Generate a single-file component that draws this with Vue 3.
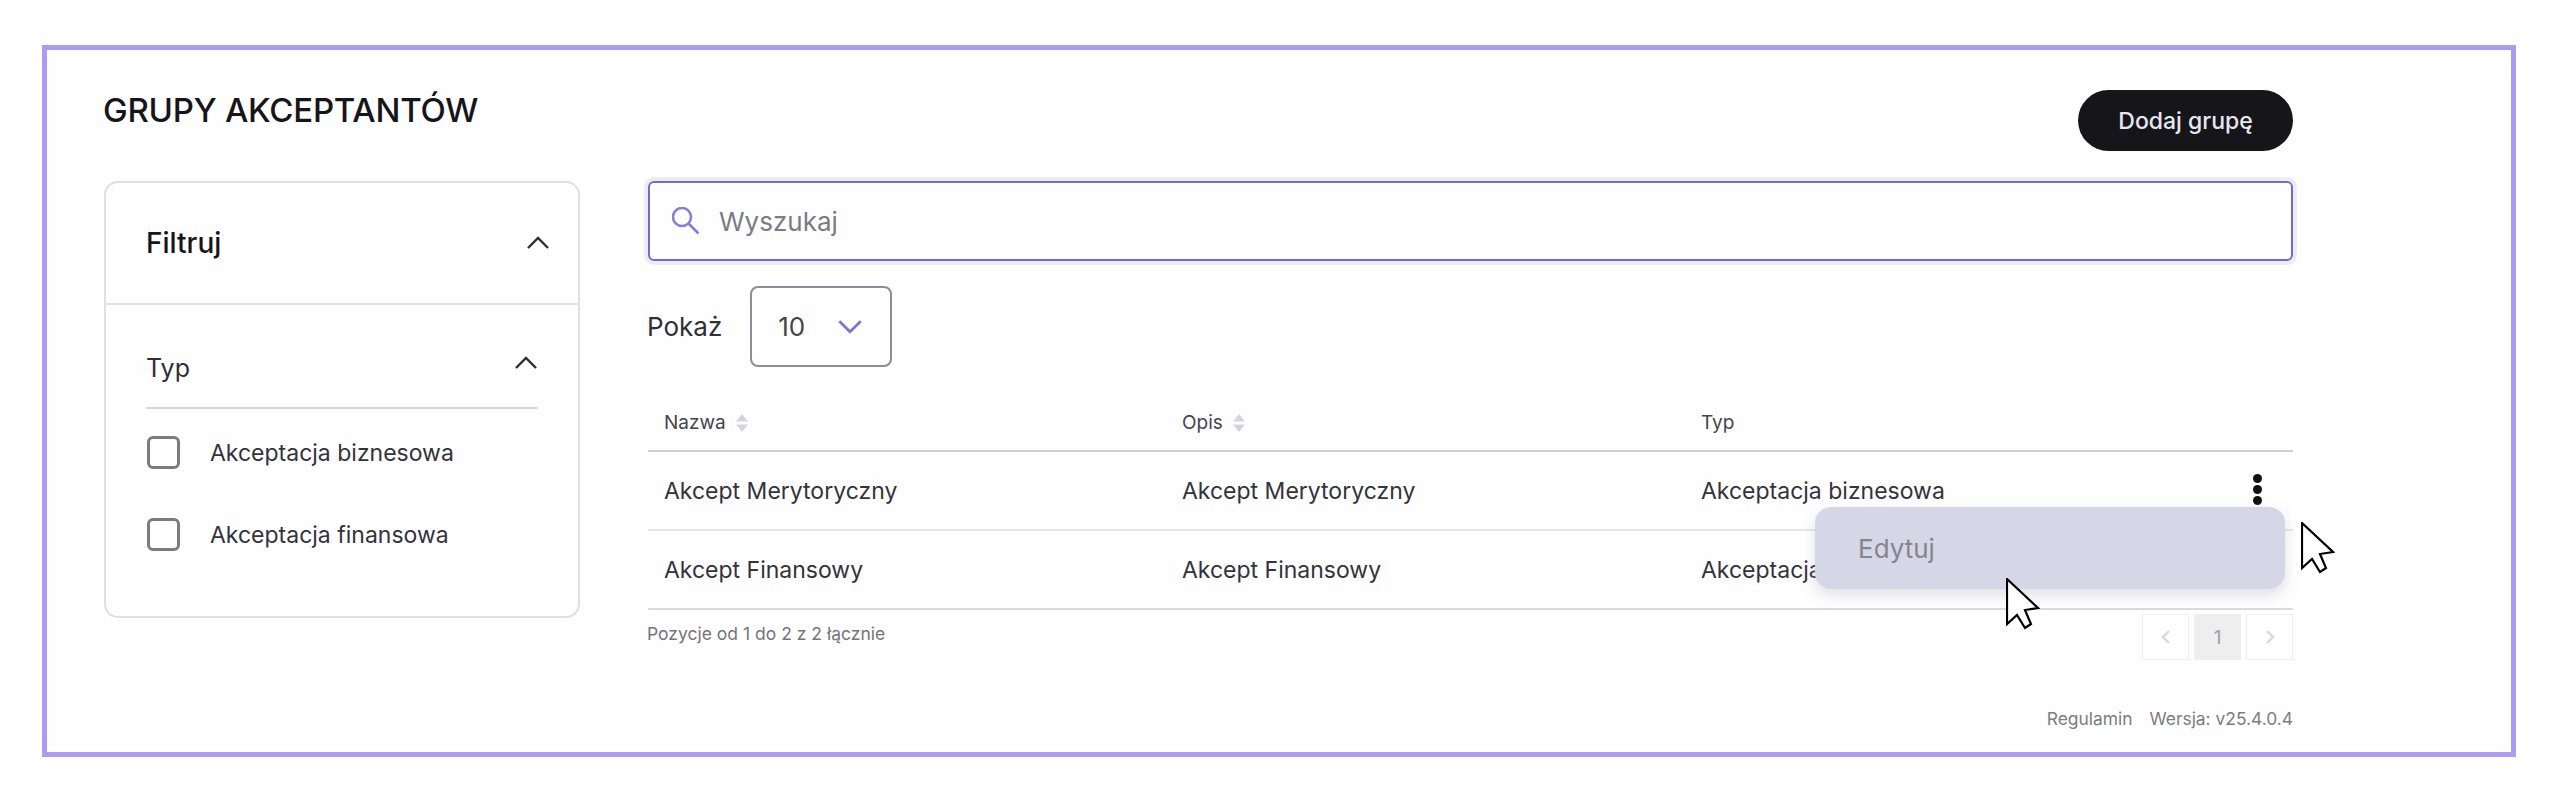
<script setup>
const rows = [
  { name: 'Akcept Merytoryczny', desc: 'Akcept Merytoryczny', type: 'Akceptacja biznesowa', menu: true },
  { name: 'Akcept Finansowy', desc: 'Akcept Finansowy', type: 'Akceptacja finansowa', menu: false },
]
const filters = ['Akceptacja biznesowa', 'Akceptacja finansowa']
</script>

<template>
  <div class="page">
    <main class="frame">
      <header class="top">
        <h1>GRUPY AKCEPTANTÓW</h1>
        <button class="add">Dodaj grupę</button>
      </header>
      <div class="body">
        <aside class="card">
          <div class="card-head">
            <span>Filtruj</span>
            <svg class="chev" viewBox="0 0 24 14"><path d="M2 12 12 2l10 10" /></svg>
          </div>
          <div class="card-body">
            <div class="group-head">
              <span>Typ</span>
              <svg class="chev" viewBox="0 0 24 14"><path d="M2 12 12 2l10 10" /></svg>
            </div>
            <label v-for="f in filters" :key="f" class="check">
              <span class="box"></span>{{ f }}
            </label>
          </div>
        </aside>
        <section class="content">
          <div class="search">
            <svg viewBox="0 0 28 28"><circle cx="10" cy="10" r="9" /><path d="m16.500 16.500 10 10" /></svg>
            <span>Wyszukaj</span>
          </div>
          <div class="show">
            <span>Pokaż</span>
            <div class="select">
              <span>10</span>
              <svg viewBox="0 0 24 14"><path d="m2 2 10 10L22 2" /></svg>
            </div>
          </div>
          <table>
            <colgroup>
              <col class="c1" /><col class="c2" /><col /><col class="c4" />
            </colgroup>
            <thead>
              <tr>
                <th>Nazwa<svg class="sort" viewBox="0 0 14 20"><path d="M7 1l6 7.500H1zM7 19l-6-7.500h12z" /></svg></th>
                <th>Opis<svg class="sort" viewBox="0 0 14 20"><path d="M7 1l6 7.500H1zM7 19l-6-7.500h12z" /></svg></th>
                <th>Typ</th>
                <th></th>
              </tr>
            </thead>
            <tbody>
              <tr v-for="r in rows" :key="r.name">
                <td>{{ r.name }}</td>
                <td>{{ r.desc }}</td>
                <td>{{ r.type }}</td>
                <td class="act">
                  <span v-if="r.menu" class="dots"><i></i><i></i><i></i></span>
                  <div v-if="r.menu" class="menu">Edytuj</div>
                </td>
              </tr>
            </tbody>
          </table>
          <div class="under">
            <span class="info">Pozycje od 1 do 2 z 2 łącznie</span>
            <div class="pager">
              <span class="pg"><svg viewBox="0 0 10 16"><path d="M8 2 2 8l6 6" /></svg></span>
              <span class="pg cur">1</span>
              <span class="pg"><svg viewBox="0 0 10 16"><path d="m2 2 6 6-6 6" /></svg></span>
            </div>
          </div>
        </section>
      </div>
      <footer class="foot"><span>Regulamin</span><span>Wersja: v25.4.0.4</span></footer>
      <svg class="cursor c-a" viewBox="0 0 34 52"><path d="M1 1v45l10-9 8 13 6-4-6-14 13-2z" /></svg>
      <svg class="cursor c-b" viewBox="0 0 34 52"><path d="M1 1v45l10-9 8 13 6-4-6-14 13-2z" /></svg>
    </main>
  </div>
</template>

<style>
html, body { margin: 0; background: #fefefe; }
</style>

<style scoped>
.page {
  width: 2572px;
  height: 804px;
  padding: 45px 56px 0 42px;
  box-sizing: border-box;
  font-family: Inter, "Noto Sans", sans-serif;
  color: #2e2e36;
  background: #fefefe;
  overflow: hidden;
}
.frame {
  position: relative;
  box-sizing: border-box;
  width: 2474px;
  height: 712px;
  border: 5px solid #ab9cf1;
  padding: 40px 218px 0 57px;
}
.top { display: flex; justify-content: space-between; align-items: flex-start; height: 61px; margin-bottom: 30px; }
h1 { margin: 0 0 0 -1px; font-size: 33px; line-height: 40px; font-weight: 500; color: #15151a; letter-spacing: -0.25px; }
.add {
  width: 215px; height: 61px; border: 0; border-radius: 31px;
  background: #15151a; color: #e6e8f0;
  font: 500 23px Inter, sans-serif;
}
.body { display: flex; gap: 68px; align-items: flex-start; }
.card {
  width: 476px; height: 437px; box-sizing: border-box; flex: none;
  border: 2px solid #e0e0e4; border-radius: 14px;
}
.card-head {
  height: 122px; box-sizing: border-box; padding: 0 28px 0 40px;
  display: flex; align-items: center; justify-content: space-between;
  border-bottom: 2px solid #e2e2de;
  font-size: 28px; font-weight: 500; color: #15151a;
}
.chev { width: 24px; height: 14px; fill: none; stroke: #2e2e36; stroke-width: 2.4; }
.card-body { padding: 0 40px; }
.group-head {
  height: 104px; box-sizing: border-box; padding-top: 24px;
  display: flex; align-items: center; justify-content: space-between;
  border-bottom: 2px solid #d6d6da;
  font-size: 25px;
}
.group-head .chev { margin-top: -10px; }
.check { display: flex; align-items: center; height: 33px; margin-top: 27px; font-size: 23px; color: #33333b; }
.check + .check { margin-top: 49px; }
.box {
  width: 33px; height: 33px; box-sizing: border-box; margin-right: 30px; margin-left: 1px;
  border: 3px solid #7b7b88; border-radius: 6px;
}
.content { flex: 1; min-width: 0; }
.search {
  height: 80px; box-sizing: border-box; display: flex; align-items: center;
  border: 2px solid #7668cc; border-radius: 6px; padding-left: 22px;
  box-shadow: 0 0 0 4px #ececf3;
  font-size: 26px; color: #7b7b85;
}
.search svg { width: 28px; height: 28px; margin-right: 19px; fill: none; stroke: #8a7ed4; stroke-width: 2.6; }
.show { display: flex; align-items: center; gap: 28px; margin-top: 25px; font-size: 26px; }
.show > span:first-child { margin-left: -1px; }
.select {
  width: 142px; height: 81px; box-sizing: border-box; display: flex; align-items: center;
  border: 2px solid #8c8c9e; border-radius: 8px; padding-left: 26px; gap: 32px; color: #44444c;
}
.select svg { width: 26px; height: 15px; fill: none; stroke: #8073d6; stroke-width: 2.6; }
table { width: 100%; table-layout: fixed; border-collapse: collapse; margin-top: 35px; }
.c1 { width: 518px; }
.c2 { width: 519px; }
.c4 { width: 70px; }
th {
  height: 49px; box-sizing: border-box; padding: 0 0 8px 16px; text-align: left;
  font-size: 19px; font-weight: 400; color: #44444c;
  border-bottom: 2px solid #cfcfd3;
}
.sort { width: 14px; height: 20px; margin-left: 9px; vertical-align: -4px; fill: #d4d4de; }
td {
  height: 79px; box-sizing: border-box; padding: 0 0 0 16px;
  font-size: 23px; color: #33333b;
  border-bottom: 2px solid #e6e6e2;
}
tr:last-child td { border-bottom-color: #d9d9e0; }
td.act { position: relative; padding: 0; }
.dots { position: absolute; left: 30px; top: 22px; display: flex; flex-direction: column; gap: 2px; }
.dots i { width: 9px; height: 9px; border-radius: 50%; background: #111; }
.menu {
  position: absolute; right: 8px; top: 55px; width: 470px; height: 82px; box-sizing: border-box;
  padding: 0 43px; display: flex; align-items: center;
  background: #d6d7e6; border-radius: 16px; color: #85858f; font-size: 26px;
  box-shadow: 0 6px 14px rgba(170,170,190,.35);
  z-index: 2;
}
.under { display: flex; justify-content: space-between; align-items: flex-start; padding-top: 4px; }
.info { font-size: 17.5px; line-height: 40px; color: #75757d; margin-left: -1px; }
.pager { display: flex; gap: 5px; }
.pg {
  width: 47px; height: 46px; box-sizing: border-box; display: flex; align-items: center; justify-content: center;
  border: 1px solid #eeeef1; font-size: 19px; color: #a0a0a8;
}
.pg svg { width: 10px; height: 16px; fill: none; stroke: #d8d8de; stroke-width: 2.4; }
.cur { background: #eeeeef; border-color: #eeeeef; }
.foot { display: flex; justify-content: flex-end; gap: 17px; margin-top: 49px; font-size: 17.4px; line-height: 20px; color: #7c7c84; }
.cursor { position: absolute; width: 34px; height: 52px; fill: #fff; stroke: #000; stroke-width: 2.2; stroke-linejoin: miter; z-index: 3; }
.c-a { left: 2254px; top: 472px; }
.c-b { left: 1959px; top: 528px; }
</style>
